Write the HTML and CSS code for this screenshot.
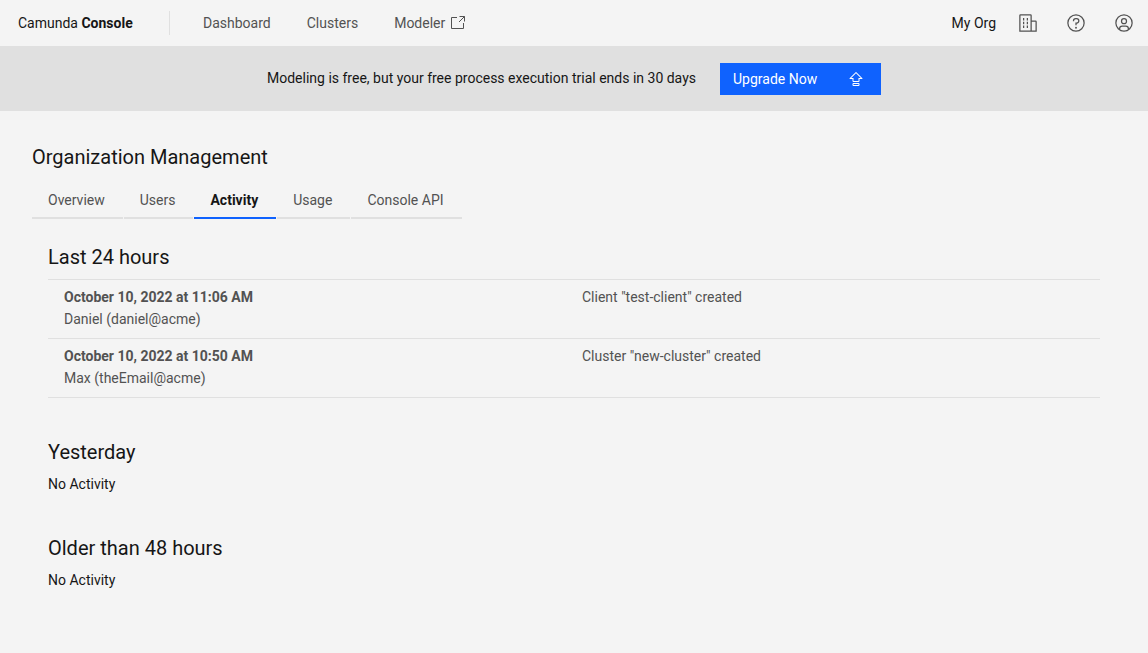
FILE: index.html
```html
<!DOCTYPE html>
<html lang="en">
<head>
  <meta charset="utf-8">
  <meta name="viewport" content="width=device-width, initial-scale=1">
  <title>Camunda Console</title>
  <link rel="stylesheet" href="styles.css">
</head>
<body>
  <header class="header">
    <a class="brand" href="#">Camunda <strong>Console</strong></a>
    <nav class="nav" aria-label="Main">
      <a class="nav-link" href="#">Dashboard</a>
      <a class="nav-link" href="#">Clusters</a>
      <a class="nav-link" href="#">Modeler
        <svg class="icon-launch" viewBox="0 0 14 14" aria-hidden="true"><path d="M6 1.500H.500v11h12V7M8.500 .500h5v5M13.500 .500 8 6"/></svg>
      </a>
    </nav>
    <div class="actions">
      <span class="org">My Org</span>
      <button class="icon-button" type="button" aria-label="Organization">
        <svg class="icon" viewBox="0 0 32 32" aria-hidden="true"><path d="M8 8h2v4H8zM8 14h2v4H8zM8 20h2v4H8zM14 8h2v4h-2zM14 14h2v4h-2zM14 20h2v4h-2z"/><path d="M30 14a2 2 0 0 0-2-2h-6V4a2 2 0 0 0-2-2H4a2 2 0 0 0-2 2v26h28ZM4 4h16v24H4Zm18 24V14h6v14Z"/></svg>
      </button>
      <button class="icon-button" type="button" aria-label="Help">
        <svg class="icon" viewBox="0 0 32 32" aria-hidden="true"><path d="M16 2a14 14 0 1 0 14 14A14 14 0 0 0 16 2Zm0 26a12 12 0 1 1 12-12 12 12 0 0 1-12 12Z"/><circle cx="16" cy="23.500" r="1.500"/><path d="M17 8h-1.500A4.490 4.490 0 0 0 11 12.500v.5h2v-.5a2.500 2.500 0 0 1 2.500-2.500H17a2.500 2.500 0 0 1 0 5h-2v4.500h2V17a4.500 4.500 0 0 0 0-9Z"/></svg>
      </button>
      <button class="icon-button" type="button" aria-label="Account">
        <svg class="icon" viewBox="0 0 32 32" aria-hidden="true"><path d="M16 8a5 5 0 1 0 5 5 5 5 0 0 0-5-5Zm0 8a3 3 0 1 1 3-3 3 3 0 0 1-3 3Z"/><path d="M16 2a14 14 0 1 0 14 14A14 14 0 0 0 16 2Zm-6 24.376V25a3 3 0 0 1 3-3h6a3 3 0 0 1 3 3v1.376a11.900 11.900 0 0 1-12 0Zm13.992-1.450A5 5 0 0 0 19 20h-6a5 5 0 0 0-4.992 4.926 12 12 0 1 1 15.984 0Z"/></svg>
      </button>
    </div>
  </header>

  <div class="banner">
    <span class="banner-text">Modeling is free, but your free process execution trial ends in 30 days</span>
    <button class="upgrade" type="button">Upgrade Now
      <svg class="icon-upgrade" viewBox="0 0 32 32" aria-hidden="true"><path d="M21 24H11a2 2 0 0 0-2 2v2a2 2 0 0 0 2 2h10a2 2 0 0 0 2-2v-2a2 2 0 0 0-2-2Zm0 4H11v-2h10Z"/><path d="m28.707 14.293-12-12a1 1 0 0 0-1.414 0l-12 12A1 1 0 0 0 4 16h5v4a2 2 0 0 0 2 2h10a2 2 0 0 0 2-2v-4h5a1 1 0 0 0 .707-1.707ZM21 14v6H11v-6H6.414L16 4.414 25.586 14Z"/></svg>
    </button>
  </div>

  <main class="page">
    <h1 class="title">Organization Management</h1>
    <div class="tabs" role="tablist" aria-label="Organization Management">
      <button class="tab" role="tab" type="button" aria-selected="false">Overview</button>
      <button class="tab" role="tab" type="button" aria-selected="false">Users</button>
      <button class="tab tab-active" role="tab" type="button" aria-selected="true">Activity</button>
      <button class="tab" role="tab" type="button" aria-selected="false">Usage</button>
      <button class="tab" role="tab" type="button" aria-selected="false">Console API</button>
    </div>
    <div class="panel" role="tabpanel" aria-label="Activity">
      <section class="period">
        <h2 class="title">Last 24 hours</h2>
        <table class="log">
          <tbody>
            <tr>
              <td class="log-who"><strong>October 10, 2022 at 11:06 AM</strong><br>Daniel (daniel@acme)</td>
              <td class="log-event">Client "test-client" created</td>
            </tr>
            <tr>
              <td class="log-who"><strong>October 10, 2022 at 10:50 AM</strong><br>Max (theEmail@acme)</td>
              <td class="log-event">Cluster "new-cluster" created</td>
            </tr>
          </tbody>
        </table>
      </section>
      <section class="period">
        <h2 class="title">Yesterday</h2>
        <p class="empty">No Activity</p>
      </section>
      <section class="period">
        <h2 class="title">Older than 48 hours</h2>
        <p class="empty">No Activity</p>
      </section>
    </div>
  </main>
</body>
</html>
```

FILE: styles.css
```css
* {
  box-sizing: border-box;
}

body {
  margin: 0;
  background: #f4f4f4;
  color: #161616;
  font: 14px/20px Roboto, sans-serif;
}

button {
  border: 0;
  background: none;
  color: inherit;
  font: inherit;
  cursor: pointer;
}

a {
  color: inherit;
  text-decoration: none;
}

svg {
  display: block;
  fill: currentColor;
}

strong {
  font-weight: 700;
}

.header {
  display: flex;
  align-items: center;
  height: 47px;
  padding-left: 18px;
  border-bottom: 1px solid #e0e0e0;
}

.brand {
  flex: 0 0 151px;
}

.nav {
  display: flex;
  align-items: center;
  gap: 36px;
  height: 24px;
  padding-left: 33px;
  border-left: 1px solid #e0e0e0;
  color: #525252;
}

.nav-link {
  display: flex;
  align-items: center;
  gap: 6px;
}

.icon-launch {
  width: 14px;
  height: 14px;
  fill: none;
  stroke: currentColor;
}

.actions {
  display: flex;
  align-items: center;
  margin-left: auto;
}

.org {
  padding-right: 8px;
}

.icon-button {
  display: grid;
  place-items: center;
  width: 48px;
  height: 46px;
  padding: 0;
  color: #525252;
}

.icon {
  width: 20px;
  height: 20px;
}

.banner {
  display: flex;
  align-items: center;
  justify-content: center;
  gap: 8px;
  min-height: 64px;
  background: #e0e0e0;
}

.banner-text {
  flex: 0 1 445px;
  padding-bottom: 2px;
}

.upgrade {
  display: flex;
  align-items: center;
  justify-content: space-between;
  width: 161px;
  height: 32px;
  padding: 0 17px 0 13px;
  background: #0f62fe;
  color: #fff;
}

.icon-upgrade {
  width: 16px;
  height: 16px;
}

.page {
  padding: 32px;
}

.title {
  margin: 0;
  font-size: 20px;
  font-weight: 400;
  line-height: 28px;
}

.tabs {
  display: flex;
  gap: 1px;
  margin-top: 8px;
}

.tab {
  height: 40px;
  padding: 4px 18px 0 16px;
  border-bottom: 2px solid #e0e0e0;
  color: #525252;
}

.tab-active {
  border-bottom-color: #0f62fe;
  color: #161616;
  font-weight: 700;
}

.panel {
  padding: 24px 16px 0;
}

.period {
  margin-bottom: 40px;
}

.log {
  width: 100%;
  margin-top: 8px;
  border-collapse: collapse;
  border-top: 1px solid #e0e0e0;
  color: #525252;
  line-height: 22px;
  table-layout: fixed;
}

.log td {
  padding: 6px 16px 8px;
  border-bottom: 1px solid #e0e0e0;
  vertical-align: top;
}

.log .log-event {
  padding-left: 8px;
}

.empty {
  margin: 8px 0 0;
}
```
